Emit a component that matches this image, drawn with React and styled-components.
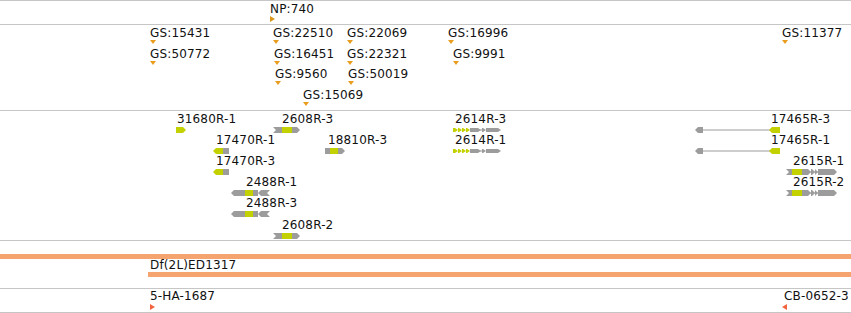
import React from "react";
import styled, { createGlobalStyle } from "styled-components";

const GREEN = "#c3d100";
const GREY = "#9c9c9c";

const GlobalStyle = createGlobalStyle`
  html, body {
    margin: 0;
    padding: 0;
    background: #fff;
    overflow: hidden;
  }
  body {
    font-family: "DejaVu Sans", "Liberation Sans", sans-serif;
  }
`;

const Browser = styled.div`
  width: 851px;
  border-top: 1px solid #c6c6c6;
`;

const Track = styled.div`
  position: relative;
  height: ${(p) => p.$h}px;
  border-bottom: 1px solid #c6c6c6;
  overflow: hidden;
`;

const Feature = styled.div`
  position: absolute;
  left: ${(p) => p.$x}px;
  top: ${(p) => p.$y}px;
  display: flex;
  flex-direction: column;
  align-items: flex-start;
`;

const Label = styled.span`
  font-size: 12px;
  line-height: 14px;
  letter-spacing: 0.15px;
  color: #111;
  white-space: nowrap;
  margin-left: ${(p) => p.$shift || 0}px;
  margin-bottom: ${(p) => p.$gap || 0}px;
`;

const Band = styled.div`
  height: 5px;
  width: ${(p) => (p.$w ? p.$w + "px" : "100%")};
  background: #f5a36f;
  margin-top: ${(p) => p.$mt || 0}px;
`;

const Marker = ({ dir, color }) => {
  const pts = {
    down: "0,0 6,0 3,4",
    right: "0,0 5,3 0,6",
    left: "5,0 0,3 5,6",
  }[dir];
  const w = dir === "down" ? 6 : 5;
  const h = dir === "down" ? 4 : 6;
  return (
    <svg width={w} height={h} style={{ display: "block" }}>
      <polygon points={pts} fill={color} />
    </svg>
  );
};

// one exon/utr piece of a gene model
const piece = (s, H) => {
  const m = H / 2;
  const { t, x, w, c } = s;
  const tip = Math.min(3, w);
  let pts;
  if (t === "box") pts = `${x},0 ${x + w},0 ${x + w},${H} ${x},${H}`;
  if (t === "right") pts = `${x},0 ${x + w - tip},0 ${x + w},${m} ${x + w - tip},${H} ${x},${H}`;
  if (t === "left") pts = `${x},${m} ${x + tip},0 ${x + w},0 ${x + w},${H} ${x + tip},${H}`;
  if (t === "notchL") pts = `${x},0 ${x + w},0 ${x + w},${H} ${x},${H} ${x + tip},${m}`;
  if (t === "notchR") pts = `${x},0 ${x + w},0 ${x + w - tip},${m} ${x + w},${H} ${x},${H}`;
  if (t === "line") return <rect key={x + t} x={x} y={m - 0.5} width={w} height={1} fill={c} />;
  return <polygon key={x + t} points={pts} fill={c} />;
};

const Model = ({ parts, h = 6 }) => {
  const w = Math.max(...parts.map((p) => p.x + p.w));
  return (
    <svg width={w} height={h} style={{ display: "block" }}>
      {parts.map((p) => piece(p, h))}
    </svg>
  );
};

const models = {
  r31680: [{ t: "right", x: 0, w: 10, c: GREEN }],
  r2608: [
    { t: "notchL", x: 0, w: 9, c: GREY },
    { t: "box", x: 9, w: 10, c: GREEN },
    { t: "right", x: 19, w: 8, c: GREY },
  ],
  r17470: [
    { t: "left", x: 0, w: 10, c: GREEN },
    { t: "box", x: 10, w: 6, c: GREY },
  ],
  r18810: [
    { t: "box", x: 0, w: 5, c: GREY },
    { t: "box", x: 5, w: 8, c: GREEN },
    { t: "right", x: 13, w: 7, c: GREY },
  ],
  r2488: [
    { t: "left", x: 0, w: 14, c: GREY },
    { t: "box", x: 14, w: 8, c: GREEN },
    { t: "box", x: 22, w: 5, c: GREY },
    { t: "left", x: 27, w: 6, c: GREY },
    { t: "notchR", x: 33, w: 6, c: GREY },
  ],
  r2614: [
    { t: "right", x: 0, w: 5, c: GREEN },
    { t: "right", x: 5, w: 4, c: GREEN },
    { t: "right", x: 9, w: 4, c: GREEN },
    { t: "right", x: 13, w: 4, c: GREEN },
    { t: "box", x: 17, w: 8, c: GREY },
    { t: "right", x: 25, w: 3, c: GREY },
    { t: "line", x: 25, w: 4, c: GREY },
    { t: "right", x: 29, w: 4, c: GREY },
    { t: "box", x: 33, w: 8, c: GREY },
    { t: "right", x: 41, w: 7, c: GREY },
  ],
  r17465: [
    { t: "left", x: 0, w: 8, c: GREY },
    { t: "line", x: 6, w: 70, c: GREY },
    { t: "left", x: 74, w: 11, c: GREEN },
  ],
  r2615: [
    { t: "notchL", x: 0, w: 6, c: GREY },
    { t: "box", x: 6, w: 10, c: GREEN },
    { t: "right", x: 16, w: 9, c: GREY },
    { t: "line", x: 24, w: 8, c: GREY },
    { t: "right", x: 25, w: 4, c: GREY },
    { t: "right", x: 29, w: 3, c: GREY },
    { t: "box", x: 32, w: 8, c: GREY },
    { t: "right", x: 40, w: 11, c: GREY },
  ],
};

const gsRow = (i) => Math.round(1 + i * 20.7);
const txRow = (i) => Math.round(1 + i * 21.1);

const gsFeatures = [
  { name: "GS:15431", x: 150, row: 0 },
  { name: "GS:50772", x: 150, row: 1 },
  { name: "GS:22510", x: 273, row: 0 },
  { name: "GS:16451", x: 274, row: 1 },
  { name: "GS:9560", x: 275, row: 2 },
  { name: "GS:15069", x: 303, row: 3 },
  { name: "GS:22069", x: 347, row: 0 },
  { name: "GS:22321", x: 347, row: 1 },
  { name: "GS:50019", x: 348, row: 2 },
  { name: "GS:16996", x: 448, row: 0 },
  { name: "GS:9991", x: 453, row: 1 },
  { name: "GS:11377", x: 782, row: 0 },
];

const transcripts = [
  { name: "31680R-1", x: 176, shift: 1, row: 0, m: "r31680" },
  { name: "2608R-3", x: 273, shift: 9, row: 0, m: "r2608" },
  { name: "17470R-1", x: 213, shift: 3, row: 1, m: "r17470" },
  { name: "18810R-3", x: 325, shift: 3, row: 1, m: "r18810" },
  { name: "17470R-3", x: 213, shift: 3, row: 2, m: "r17470" },
  { name: "2488R-1", x: 231, shift: 15, row: 3, m: "r2488" },
  { name: "2488R-3", x: 231, shift: 15, row: 4, m: "r2488" },
  { name: "2608R-2", x: 273, shift: 9, row: 5, m: "r2608" },
  { name: "2614R-3", x: 453, shift: 2, row: 0, m: "r2614", h: 4, gap: 2 },
  { name: "2614R-1", x: 453, shift: 2, row: 1, m: "r2614", h: 4, gap: 2 },
  { name: "17465R-3", x: 695, shift: 76, row: 0, m: "r17465" },
  { name: "17465R-1", x: 695, shift: 76, row: 1, m: "r17465" },
  { name: "2615R-1", x: 786, shift: 7, row: 2, m: "r2615" },
  { name: "2615R-2", x: 786, shift: 7, row: 3, m: "r2615" },
];

export default function App() {
  return (
    <>
      <GlobalStyle />
      <Browser>
        <Track $h={23}>
          <Feature $x={270} $y={1}>
            <Label>NP:740</Label>
            <Marker dir="right" color="#d9961a" />
          </Feature>
        </Track>

        <Track $h={85}>
          {gsFeatures.map((f) => (
            <Feature key={f.name} $x={f.x} $y={gsRow(f.row)}>
              <Label>{f.name}</Label>
              <Marker dir="down" color="#e99d1d" />
            </Feature>
          ))}
        </Track>

        <Track $h={129}>
          {transcripts.map((f) => (
            <Feature key={f.name} $x={f.x} $y={txRow(f.row)}>
              <Label $shift={f.shift} $gap={f.gap ?? 1}>
                {f.name}
              </Label>
              <Model parts={models[f.m]} h={f.h} />
            </Feature>
          ))}
        </Track>

        <Track $h={47}>
          <Band $mt={13} />
          <Feature $x={148} $y={17}>
            <Label $shift={2}>Df(2L)ED1317</Label>
            <Band $w={703} />
          </Feature>
        </Track>

        <Track $h={23}>
          <Feature $x={150} $y={0}>
            <Label $gap={1}>5-HA-1687</Label>
            <Marker dir="right" color="#f2643e" />
          </Feature>
          <Feature $x={782} $y={0}>
            <Label $shift={2} $gap={1}>CB-0652-3</Label>
            <Marker dir="left" color="#f2643e" />
          </Feature>
        </Track>
      </Browser>
    </>
  );
}
